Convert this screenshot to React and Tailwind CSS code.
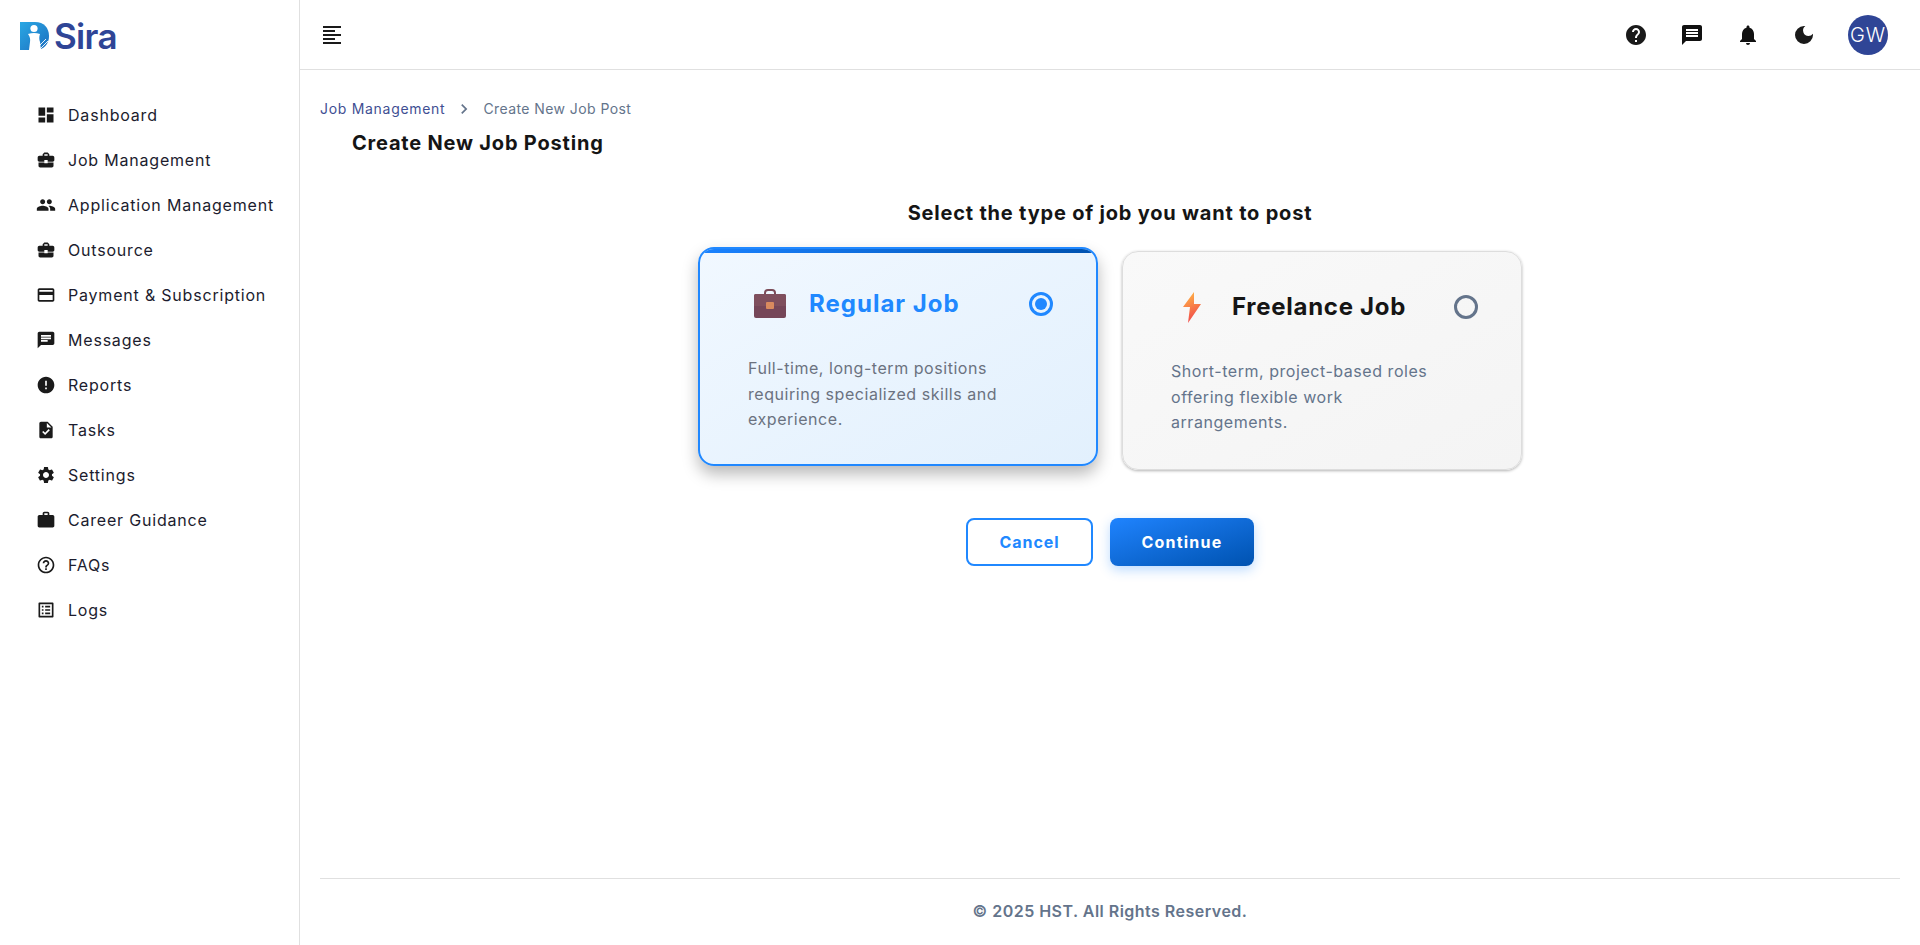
import React from 'react';
import {
  MdDashboard,
  MdBusinessCenter,
  MdPeople,
  MdCreditCard,
  MdChat,
  MdError,
  MdTask,
  MdSettings,
  MdWork,
  MdHelpOutline,
  MdListAlt,
  MdHelp,
  MdMessage,
  MdNotifications,
  MdDarkMode,
  MdFormatAlignLeft,
  MdChevronRight,
} from 'react-icons/md';

const menuItems = [
  { label: 'Dashboard', icon: MdDashboard },
  { label: 'Job Management', icon: MdBusinessCenter },
  { label: 'Application Management', icon: MdPeople },
  { label: 'Outsource', icon: MdBusinessCenter },
  { label: 'Payment & Subscription', icon: MdCreditCard },
  { label: 'Messages', icon: MdChat },
  { label: 'Reports', icon: MdError },
  { label: 'Tasks', icon: MdTask },
  { label: 'Settings', icon: MdSettings },
  { label: 'Career Guidance', icon: MdWork },
  { label: 'FAQs', icon: MdHelpOutline },
  { label: 'Logs', icon: MdListAlt },
];

const LogoMark = () => (
  <svg width="30" height="30" viewBox="0 0 30 30">
    <defs>
      <linearGradient id="logoFill" x1="0" y1="0" x2="1" y2="1">
        <stop offset="0" stopColor="#2aa8e4" />
        <stop offset="1" stopColor="#1c6fc0" />
      </linearGradient>
    </defs>
    <path d="M0 1h15c9 0 14 6 14 14 0 8-5 14-14 14H0z" fill="url(#logoFill)" />
    <circle cx="14" cy="7.5" r="3.6" fill="#fff" />
    <path d="M8 13c4-1.5 8-1.5 12 0-1 3-1 5 0 8l1 8H9l1-8c.5-3 0-5-2-8z" fill="#fff" />
    <path d="M20 28l8-8M23 29l6-6M19 25l7-7" stroke="#fff" strokeWidth="0.9" />
  </svg>
);

const Briefcase = () => (
  <svg width="34" height="30" viewBox="0 0 34 30">
    <path d="M12 7V4a3 3 0 0 1 3-3h4a3 3 0 0 1 3 3v3" fill="none" stroke="#7b4b58" strokeWidth="2" />
    <rect x="1" y="5" width="32" height="24" rx="2" fill="#754658" />
    <path d="M1 7a2 2 0 0 1 2-2h28a2 2 0 0 1 2 2v10H1z" fill="#7f4f5d" />
    <rect x="13" y="13" width="8" height="7" rx="1" fill="#d98a5e" />
  </svg>
);

const Bolt = () => (
  <svg width="18" height="31" viewBox="0 0 18 31">
    <defs>
      <linearGradient id="boltFill" x1="0.3" y1="0" x2="0.6" y2="1">
        <stop offset="0" stopColor="#ffb545" />
        <stop offset="1" stopColor="#f0424c" />
      </linearGradient>
    </defs>
    <path d="M11 0L0 15h7L5 31l13-19h-7z" fill="url(#boltFill)" />
  </svg>
);

const App = () => {
  return (
    <div className="flex h-screen bg-white font-['Inter',sans-serif] text-[#1a1a1a]">
      {/* Sidebar */}
      <aside className="w-[300px] shrink-0 border-r border-[#e0e0e0] flex flex-col">
        <div className="h-[92px] flex items-start pl-5 pt-[21px] gap-[4px]">
          <LogoMark />
          <span className="text-[35px] leading-[30px] font-semibold text-[#2f4596] tracking-[-0.02em]">Sira</span>
        </div>
        <nav className="flex flex-col">
          {menuItems.map(({ label, icon: Icon }) => (
            <div key={label} className="h-[45px] flex items-center pl-9 gap-3">
              <Icon size={20} className="text-[#1a1a1a]" />
              <span className="text-[16px] tracking-[0.05em] text-[#1c1c2e] whitespace-nowrap">{label}</span>
            </div>
          ))}
        </nav>
      </aside>

      {/* Main */}
      <div className="flex-1 flex flex-col min-w-0">
        <header className="h-[70px] shrink-0 border-b border-[#e0e0e0] flex items-center justify-between pl-5 pr-8">
          <MdFormatAlignLeft size={24} className="text-[#1a1a1a]" />
          <div className="flex items-center gap-8">
            <MdHelp size={24} className="text-[#1a1a1a]" />
            <MdMessage size={24} className="text-[#111]" />
            <MdNotifications size={24} className="text-[#111]" />
            <MdDarkMode size={24} className="text-[#1a1a1a]" />
            <div className="w-10 h-10 rounded-full bg-[#2f4596] text-white text-[20px] font-light tracking-[0.04em] flex items-center justify-center">GW</div>
          </div>
        </header>

        <main className="flex-1 flex flex-col px-5 min-h-0">
          <div className="flex items-center mt-[29px] text-[14px] leading-[20px] whitespace-nowrap">
            <span className="text-[#3f4f93] tracking-[0.05em]">Job Management</span>
            <MdChevronRight size={20} className="text-[#64748b] mx-[9px]" />
            <span className="text-[#64748b] tracking-[0.03em]">Create New Job Post</span>
          </div>
          <h1 className="ml-8 mt-[10px] text-[20px] leading-[28px] font-bold tracking-[0.04em] text-[#151515]">Create New Job Posting</h1>

          <h2 className="mt-[42px] text-center text-[20px] leading-[28px] font-bold tracking-[0.04em] text-[#151515]">Select the type of job you want to post</h2>

          <div className="flex justify-center gap-6 mt-[24px]">
            {/* Regular, selected */}
            <div className="relative overflow-hidden w-[400px] h-[219px] -translate-y-1 rounded-2xl border-2 border-[#2088ff] bg-gradient-to-br from-[#f1f8ff] to-[#e2f0fd] shadow-[0_8px_16px_rgba(0,0,0,0.28)] pl-[48px] pr-[43px] pt-[28px]">
              <div className="absolute left-0 right-0 top-0 h-[4px] bg-gradient-to-r from-[#1a82ff] to-[#0052b0]" />
              <div className="flex items-center h-[54px]">
                <div className="w-[61px] pl-[5px]"><Briefcase /></div>
                <span className="text-[24px] font-bold tracking-[0.042em] text-[#2088ff]">Regular Job</span>
                <div className="ml-auto w-6 h-6 rounded-full border-[3px] border-[#2088ff] flex items-center justify-center">
                  <div className="w-3 h-3 rounded-full bg-[#2088ff]" />
                </div>
              </div>
              <p className="mt-[25px] text-[16px] leading-[25.6px] tracking-[0.034em] text-[#6b7280] whitespace-nowrap">
                Full-time, long-term positions<br />requiring specialized skills and<br />experience.
              </p>
            </div>

            {/* Freelance */}
            <div className="w-[400px] h-[219px] rounded-2xl border border-[#dddddd] bg-gradient-to-br from-[#f9f9f9] to-[#f4f4f4] shadow-[0_1px_3px_rgba(0,0,0,0.3)] pl-[48px] pr-[43px] pt-[28px]">
              <div className="flex items-center h-[54px]">
                <div className="w-[61px] pl-[12px]"><Bolt /></div>
                <span className="text-[24px] font-bold tracking-[0.03em] text-[#151515]">Freelance Job</span>
                <div className="ml-auto w-6 h-6 rounded-full border-[3px] border-[#64748b]" />
              </div>
              <p className="mt-[25px] text-[16px] leading-[25.6px] tracking-[0.034em] text-[#64748b] whitespace-nowrap">
                Short-term, project-based roles<br />offering flexible work<br />arrangements.
              </p>
            </div>
          </div>

          <div className="flex justify-center gap-[17px] mt-[48px]">
            <button className="w-[127px] h-12 rounded-lg border-2 border-[#2088ff] bg-white text-[16px] font-bold tracking-[0.06em] text-[#2088ff]">Cancel</button>
            <button className="w-[144px] h-12 rounded-lg bg-gradient-to-br from-[#1f84ff] to-[#0052b0] text-[16px] font-bold tracking-[0.075em] text-white shadow-[0_4px_12px_rgba(32,136,255,0.3)]">Continue</button>
          </div>

          <footer className="mt-auto h-[67px] pb-[2px] border-t border-[#e0e0e0] flex items-center justify-center text-[16px] font-semibold tracking-[0.03em] text-[#64748b]">
            © 2025 HST. All Rights Reserved.
          </footer>
        </main>
      </div>
    </div>
  );
};

export default App;
